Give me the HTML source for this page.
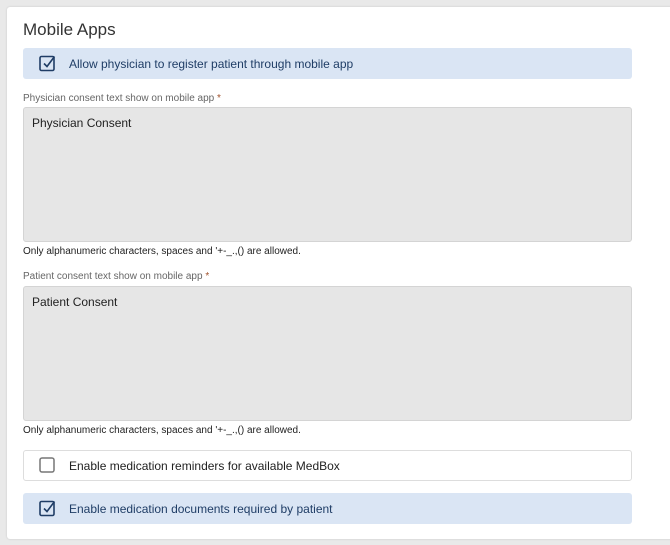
<!DOCTYPE html>
<html><head><style>
body{margin:0;width:670px;height:545px;background:#e9e9e9;font-family:"Liberation Sans",sans-serif;position:relative;overflow:hidden}
.card{position:absolute;left:7px;top:7px;width:680px;height:532px;background:#fff;border-radius:3px;box-shadow:0 0 2px rgba(0,0,0,.15)}
.a{position:absolute}
.title{left:23px;top:20px;font-size:17px;color:#333}
.opt{left:23px;width:609px;height:31px;border-radius:3px;box-sizing:border-box;font-size:12px;line-height:31px}
.blue{background:#dae5f4;color:#1f3d66}
.white{background:#fff;border:1px solid #ddd;color:#222}
.opt span{position:absolute;left:46px;top:1px}
.lbl{left:23px;font-size:10px;color:#666}
.lbl b{color:#a0522d;font-weight:normal}
.ta{left:23px;width:609px;height:135px;background:#e6e6e6;border:1px solid #d4d4d4;border-radius:3px;box-sizing:border-box;font-size:12px;color:#222;padding:8px 8px}
.help{left:23px;font-size:10px;color:#222}
svg{position:absolute;left:16px;top:7px}
</style></head><body>
<div class="card"></div>
<div class="a title">Mobile Apps</div>
<div class="a opt blue" style="top:48px"><svg width="17" height="17" viewBox="0 0 17 17"><rect x="1" y="1.5" width="14" height="14" rx="1.5" fill="none" stroke="#1f3d66" stroke-width="1.6"/><path d="M5 8.5l3 3 7.5-10" fill="none" stroke="#1f3d66" stroke-width="1.6"/></svg><span>Allow physician to register patient through mobile app</span></div>
<div class="a lbl" style="top:93px">Physician consent text show on mobile app <b>*</b></div>
<div class="a ta" style="top:107px">Physician Consent</div>
<div class="a help" style="top:246px">Only alphanumeric characters, spaces and '+-_.,() are allowed.</div>
<div class="a lbl" style="top:271px">Patient consent text show on mobile app <b>*</b></div>
<div class="a ta" style="top:286px">Patient Consent</div>
<div class="a help" style="top:425px">Only alphanumeric characters, spaces and '+-_.,() are allowed.</div>
<div class="a opt white" style="top:450px"><svg width="17" height="17" viewBox="0 0 17 17" style="left:15px;top:6px"><rect x="1" y="1" width="14" height="14" rx="2" fill="none" stroke="#777" stroke-width="1.5"/></svg><span style="left:45px;top:0px">Enable medication reminders for available MedBox</span></div>
<div class="a opt blue" style="top:493px"><svg width="17" height="17" viewBox="0 0 17 17"><rect x="1" y="1.5" width="14" height="14" rx="1.5" fill="none" stroke="#1f3d66" stroke-width="1.6"/><path d="M5 8.5l3 3 7.5-10" fill="none" stroke="#1f3d66" stroke-width="1.6"/></svg><span>Enable medication documents required by patient</span></div>
</body></html>
